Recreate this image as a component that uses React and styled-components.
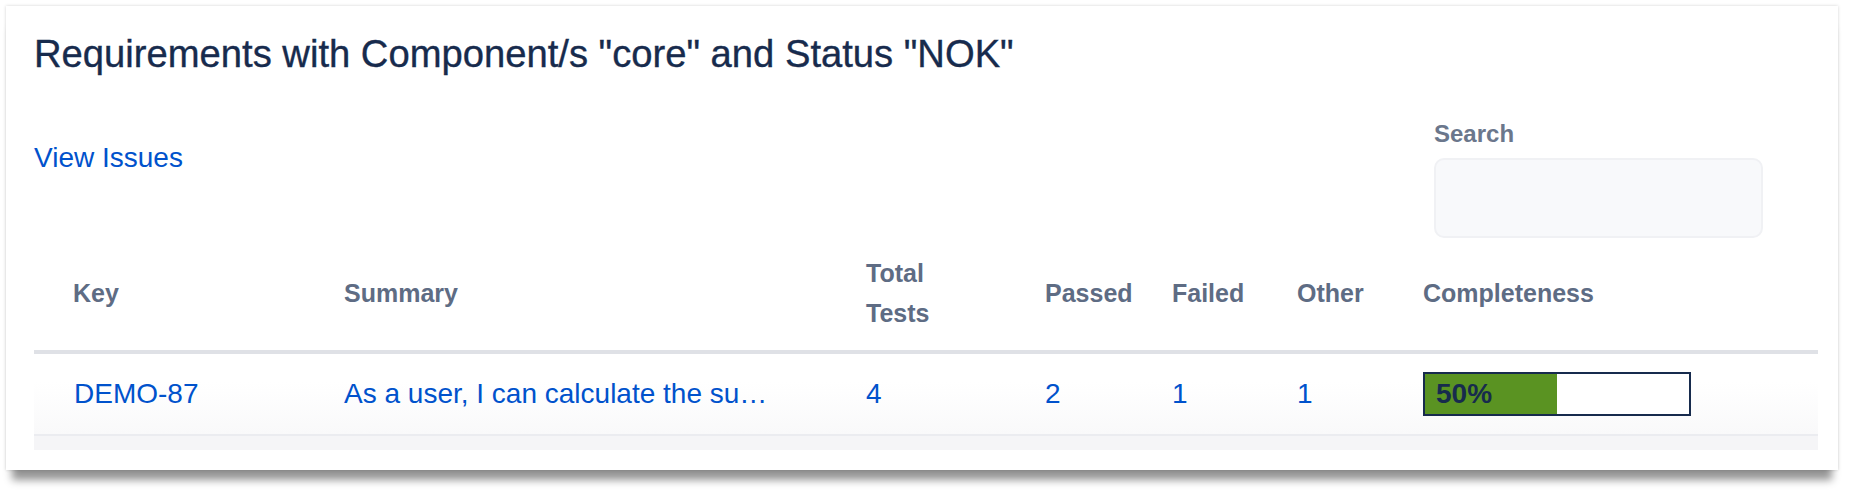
import React from "react";
import styled, { createGlobalStyle } from "styled-components";

const GlobalStyle = createGlobalStyle`
  html, body {
    margin: 0;
    padding: 0;
    background: #fff;
    font-family: "Liberation Sans", Arial, sans-serif;
  }
`;

const columns = "310px 522px 179px 127px 125px 126px 1fr";

const rows = [
  {
    key: "DEMO-87",
    summary: "As a user, I can calculate the su…",
    total: 4,
    passed: 2,
    failed: 1,
    other: 1,
    completeness: 50,
  },
];

const App = () => {
  return (
    <React.Fragment>
      <GlobalStyle />
      <Page>
        <Card>
          <Title>Requirements with Component/s "core" and Status "NOK"</Title>

          <Toolbar>
            <ViewLink href="#">View Issues</ViewLink>
            <SearchBox>
              <SearchLabel>Search</SearchLabel>
              <SearchInput type="text" />
            </SearchBox>
          </Toolbar>

          <Table>
            <HeadRow>
              <HeadCell $first>Key</HeadCell>
              <HeadCell>Summary</HeadCell>
              <HeadCell>
                Total
                <br />
                Tests
              </HeadCell>
              <HeadCell>Passed</HeadCell>
              <HeadCell>Failed</HeadCell>
              <HeadCell>Other</HeadCell>
              <HeadCell>Completeness</HeadCell>
            </HeadRow>

            {rows.map((r) => (
              <BodyRow key={r.key}>
                <Cell $first>
                  <CellLink href="#">{r.key}</CellLink>
                </Cell>
                <Cell>
                  <CellLink href="#">{r.summary}</CellLink>
                </Cell>
                <Cell>
                  <CellLink href="#">{r.total}</CellLink>
                </Cell>
                <Cell>
                  <CellLink href="#">{r.passed}</CellLink>
                </Cell>
                <Cell>
                  <CellLink href="#">{r.failed}</CellLink>
                </Cell>
                <Cell>
                  <CellLink href="#">{r.other}</CellLink>
                </Cell>
                <Cell>
                  <Progress>
                    <ProgressFill style={{ width: `${r.completeness}%` }}>
                      {r.completeness}%
                    </ProgressFill>
                  </Progress>
                </Cell>
              </BodyRow>
            ))}

            <TableFoot />
          </Table>
        </Card>
      </Page>
    </React.Fragment>
  );
};

const Page = styled.div`
  padding: 6px 14px 29px 6px;
`;

const Card = styled.div`
  background: #fff;
  padding: 26px 20px 20px 28px;
  box-shadow: 0 0 3px rgba(0, 0, 0, 0.18), 0 16px 8px -6px rgba(0, 0, 0, 0.42);
`;

const Title = styled.h1`
  margin: 0;
  font-size: 38.2px;
  line-height: 44px;
  font-weight: 400;
  color: #172b4d;
  -webkit-text-stroke: 0.35px #172b4d;
`;

const Toolbar = styled.div`
  display: flex;
  justify-content: space-between;
  align-items: flex-start;
  margin-top: 42px;
  padding-right: 55px;
`;

const ViewLink = styled.a`
  margin-top: 20px;
  font-size: 28px;
  line-height: 40px;
  color: #0052cc;
  text-decoration: none;
`;

const SearchBox = styled.div`
  display: flex;
  flex-direction: column;
  gap: 8px;
`;

const SearchLabel = styled.label`
  font-size: 24px;
  line-height: 32px;
  font-weight: 700;
  color: #6b778c;
`;

const SearchInput = styled.input`
  box-sizing: border-box;
  width: 329px;
  height: 80px;
  border: 2px solid #f0f1f4;
  border-radius: 10px;
  background: #f8f9fb;
  outline: none;
`;

const Table = styled.div`
  display: flex;
  flex-direction: column;
`;

const HeadRow = styled.div`
  display: grid;
  grid-template-columns: ${columns};
  align-items: center;
  padding: 15px 0 17px;
  border-bottom: 4px solid #dfe1e6;
`;

const HeadCell = styled.div`
  padding-left: ${(p) => (p.$first ? "39px" : "0")};
  font-size: 25px;
  line-height: 40px;
  font-weight: 700;
  color: #5e6c84;
`;

const BodyRow = styled.div`
  display: grid;
  grid-template-columns: ${columns};
  align-items: center;
  height: 80px;
  border-bottom: 2px solid #ebecf0;
  background: linear-gradient(to bottom, #fff 35%, #f9f9fa);
`;

const Cell = styled.div`
  padding-left: ${(p) => (p.$first ? "40px" : "0")};
  font-size: 28px;
  line-height: 40px;
  white-space: nowrap;
`;

const CellLink = styled.a`
  color: #0052cc;
  text-decoration: none;
`;

const Progress = styled.div`
  box-sizing: border-box;
  width: 268px;
  height: 44px;
  border: 2px solid #172b4d;
  background: #fff;
  display: flex;
`;

const ProgressFill = styled.div`
  box-sizing: border-box;
  background: #5a9322;
  padding-left: 11px;
  font-size: 28px;
  line-height: 40px;
  font-weight: 700;
  color: #172b4d;
  white-space: nowrap;
`;

const TableFoot = styled.div`
  height: 14px;
  background: #f5f5f7;
`;

export default App;
